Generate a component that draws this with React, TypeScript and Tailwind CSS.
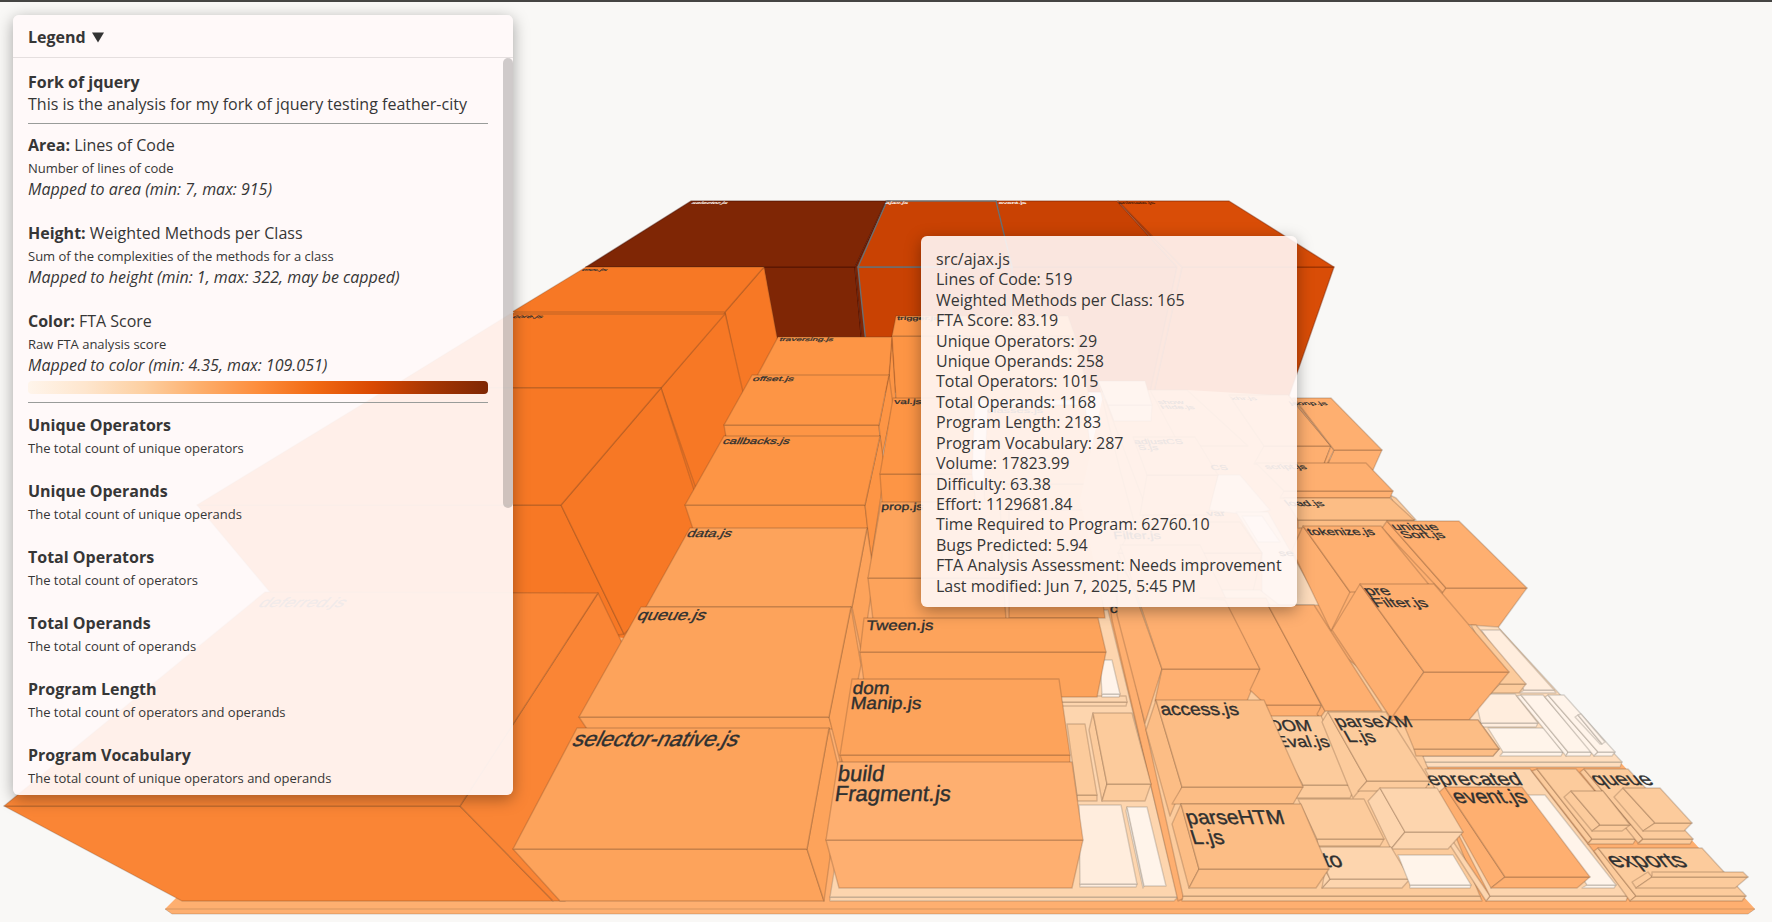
import React from "react";

type Face = { p: string; f: string; s?: string };
type Block = { roof: string; faces?: string[]; fill: string; edge?: string };
type Label = {
  t: string;
  x: number;
  y: number;
  size: number;
  depth: number;
  lean: number;
  fill?: string;
};

const C = {
  umber: "#7f2605",
  rust: "#c94203",
  ember: "#d94d07",
  orange: "#f77825",
  amber: "#fa8535",
  tangerine: "#fd9545",
  apricot: "#fda35b",
  peach: "#feaf70",
  melon: "#fcbd85",
  sand: "#fccb9c",
  wheat: "#fdd5ae",
  cream: "#feddbd",
  shell: "#ffeddd",
  milk: "#fff4ea",
};

const EDGE = "rgba(90,60,40,0.23)";
const PALE_EDGE = "rgba(120,110,100,0.28)";

const ground: Face[] = [
  { p: "177,897 640,480 1300,480 1384,498 1499,628 1622,764 1755,909 165,909", f: C.peach, s: "none" },
  { p: "165,909 1755,909 1748,914 172,914", f: C.peach },
];

const backRow: Block[] = [
  { roof: "691,201 886,201 855,267 586,267", faces: ["586,267 855,267 862,345 586,345", "886,201 890,201 860,267 866,345 862,345 855,267"], fill: C.umber, edge: "rgba(60,10,0,0.4)" },
  { roof: "996,201 1117,201 1177,267 1011,267", faces: ["1011,267 1177,267 1152,392 1009,392"], fill: C.rust, edge: "rgba(110,30,0,0.4)" },
  { roof: "1118,201 1229,201 1334,267 1182,267", faces: ["1182,267 1334,267 1289,396 1154,392", "1118,201 1182,267 1154,392 1150,392 1177,267"], fill: C.ember, edge: "rgba(110,30,0,0.4)" },
  { roof: "887,201 996,201 1012,267 858,267", faces: ["858,267 1012,267 1010,392 871,392"], fill: C.rust, edge: "#6b6f72" },
];

const leftColumn: Block[] = [
  { roof: "586,267 764,267 725,312 512,312", faces: ["725,312 764,267 777,337 790,420 743,400"], fill: C.orange },
  { roof: "510,314 725,314 661,388 390,388", faces: ["725,313 743,392 700,500 661,388"], fill: C.orange },
  { roof: "389,388 661,388 561,505 197,505", faces: ["197,505 561,505 624,634 590,640 310,640", "661,388 694,490 700,560 624,634 561,505"], fill: C.orange },
  { roof: "265,592 598,593 460,806 4,806", faces: ["4,806 460,806 553,901 182,901", "598,593 640,680 586,800 565,901 553,901 460,806"], fill: C.amber },
];

const midColumn: Block[] = [
  { roof: "778,337 892,337 889,376 757,376", faces: ["892,337 896,400 884,410 889,376"], fill: C.tangerine },
  { roof: "752,375 889,375 879,425 724,425", faces: ["724,425 879,425 880,437 726,437", "889,375 893,405 882,457 879,425"], fill: C.tangerine },
  { roof: "724,436 880,436 865,505 685,505", faces: ["685,505 865,505 868,529 693,529", "880,436 885,470 871,560 865,505"], fill: C.tangerine },
  { roof: "690,528 867,528 852,607 646,607", faces: ["867,528 874,575 862,655 852,607"], fill: C.apricot },
  { roof: "641,607 851,607 829,717 579,717", faces: ["579,717 829,717 833,729 587,729", "851,607 861,665 841,765 829,717"], fill: C.apricot },
  { roof: "577,728 829,728 807,849 513,849", faces: ["513,849 807,849 824,901 560,901", "829,728 841,778 824,901 807,849"], fill: C.apricot },
];

const courtyard: Block[] = [
  { roof: "1085,610 1108,610 1178,897 830,897 836,860", faces: ["830,897 1178,897 1174,901 830,901"], fill: C.wheat, edge: PALE_EDGE },
  { roof: "1108,590 1117,600 1187,897 1178,901 1112,620", fill: C.peach },
  { roof: "1040,696 1126,696 1127,702 1040,702", faces: ["1040,702 1127,702 1126,706 1040,706"], fill: C.wheat },
  { roof: "1100,660 1112,660 1120,694 1102,694", faces: ["1102,694 1120,694 1119,697 1102,697"], fill: C.milk, edge: PALE_EDGE },
  { roof: "1067,724 1085,724 1097,795 1077,795", faces: ["1077,795 1097,795 1097,801 1077,801"], fill: C.sand },
  { roof: "1093,713 1132,713 1151,784 1107,784", faces: ["1093,713 1089,730 1102,801 1107,784", "1107,784 1151,784 1145,801 1102,801"], fill: C.sand },
  { roof: "1079,805 1121,805 1137,884 1080,884", faces: ["1080,884 1137,884 1136,887 1080,887"], fill: C.shell, edge: PALE_EDGE },
  { roof: "1127,807 1147,807 1166,886 1144,886", faces: ["1127,807 1144,886 1143,888 1126,811"], fill: C.milk, edge: PALE_EDGE },
];

const innerColumn: Block[] = [
  { roof: "896,316 1068,316 1075,336 892,336", faces: ["892,336 1075,336 1090,400 896,400"], fill: C.tangerine },
  { roof: "893,398 975,398 972,474 880,474", faces: ["880,474 972,474 976,503 882,503"], fill: C.tangerine },
  { roof: "988,405 1085,405 1095,484 984,484", faces: ["984,484 1095,484 1092,540 986,540"], fill: C.apricot },
  { roof: "881,502 1000,502 1003,578 868,578", faces: ["868,578 1003,578 1006,620 873,620"], fill: C.apricot },
  { roof: "1009,510 1090,510 1105,618 1009,618", fill: C.apricot },
  { roof: "864,618 1098,618 1106,652 860,652", faces: ["860,652 1106,652 1097,697 866,697"], fill: C.apricot },
  { roof: "852,679 1059,679 1070,755 840,755", faces: ["840,755 1070,755 1070,763 843,763"], fill: C.apricot },
  { roof: "838,762 1072,762 1083,840 826,840", faces: ["826,840 1083,840 1072,888 839,888"], fill: C.peach },
];

const rightBack: Block[] = [
  { roof: "1102,400 1150,390 1187,390 1290,396 1330,460 1320,540 1322,606 1104,606 1080,500", fill: C.peach, edge: "none" },
  { roof: "1098,381 1145,381 1152,405 1108,405", faces: ["1108,405 1152,405 1151,421 1114,421"], fill: C.wheat },
  { roof: "1150,390 1187,390 1248,446 1180,446", faces: ["1098,381 1145,505 1139,540 1120,470"], fill: C.peach },
  { roof: "1229,395 1288,395 1331,446 1264,446", faces: ["1264,446 1331,446 1324,464 1254,464"], fill: C.peach },
  { roof: "1294,398 1331,398 1382,450 1334,450", faces: ["1334,450 1382,450 1373,470 1328,464", "1294,398 1334,450 1327,464 1324,464 1331,446 1291,398"], fill: C.peach },
  { roof: "1390,495 1396,498 1416,520 1400,520", fill: C.sand },
  { roof: "1256,463 1366,463 1393,491 1284,491", faces: ["1284,491 1393,491 1390,498 1280,498"], fill: C.peach },
  { roof: "1284,498 1390,498 1414,520 1298,520", faces: ["1298,520 1414,520 1414,528 1298,528"], fill: C.melon },
  { roof: "1218,475 1240,475 1270,510 1250,515 1208,510", fill: C.cream, edge: PALE_EDGE },
  { roof: "1133,437 1195,437 1218,475 1147,475", faces: ["1147,475 1218,475 1208,515 1140,515"], fill: C.peach },
  { roof: "1236,512 1268,512 1321,605 1262,605 1262,553", fill: C.cream, edge: PALE_EDGE },
  { roof: "1242,516 1262,516 1280,542 1258,542", fill: C.milk, edge: PALE_EDGE },
  { roof: "1135,522 1240,522 1262,553 1118,553", faces: ["1118,553 1262,553 1250,604 1140,604"], fill: C.peach },
  { roof: "1387,521 1459,521 1527,588 1446,588", faces: ["1387,521 1446,588 1443,593 1382,528", "1446,588 1527,588 1497,629 1470,629 1440,596"], fill: C.peach },
  { roof: "1303,526 1381,526 1435,592 1350,592", faces: ["1303,526 1350,592 1331,631 1292,550"], fill: C.peach },
];

const rightMid: Block[] = [
  { roof: "1115,590 1260,590 1400,700 1480,896 1183,896", faces: ["1183,896 1480,896 1482,901 1182,901"], fill: C.sand },
  { roof: "1120,545 1200,545 1260,669 1162,669", faces: ["1118,560 1117,615 1145,723 1162,669 1130,580", "1162,669 1260,669 1247,701 1155,701"], fill: C.peach },
  { roof: "1200,598 1266,598 1321,705 1266,705 1250,690 1260,669 1225,600", faces: ["1266,705 1321,705 1318,717 1266,717"], fill: C.peach },
  { roof: "1268,605 1314,605 1382,711 1325,711", faces: ["1268,605 1325,711 1320,718 1317,714 1322,705"], fill: C.peach },
];

const parkBase: Block[] = [
  { roof: "1400,620 1498,627 1622,762 1415,762", faces: ["1415,762 1622,762 1620,767 1415,767"], fill: C.cream, edge: PALE_EDGE },
  { roof: "1481,630 1500,630 1554,690 1524,690", faces: ["1524,690 1554,690 1556,693 1520,693"], fill: C.shell, edge: PALE_EDGE },
  { roof: "1471,625 1476,625 1526,684 1500,684", faces: ["1500,684 1526,684 1519,693 1490,693"], fill: C.sand },
  { roof: "1474,694 1515,694 1538,723 1481,723", faces: ["1481,723 1538,723 1536,727 1479,727"], fill: C.shell, edge: PALE_EDGE },
  { roof: "1488,728 1544,728 1563,752 1503,752", faces: ["1503,752 1563,752 1561,756 1500,756"], fill: C.milk, edge: PALE_EDGE },
  { roof: "1521,695 1543,695 1592,752 1568,752", faces: ["1521,695 1517,696 1566,756 1568,752", "1568,752 1592,752 1590,756 1566,756"], fill: C.milk, edge: PALE_EDGE },
  { roof: "1548,695 1564,695 1615,752 1598,752", faces: ["1548,695 1545,697 1594,756 1598,752", "1598,752 1615,752 1612,756 1594,756"], fill: C.milk, edge: PALE_EDGE },
  { roof: "1578,715 1581,714 1605,742 1602,744", faces: ["1578,715 1575,717 1600,744 1602,744"], fill: C.milk, edge: PALE_EDGE },
  { roof: "1402,720 1478,720 1499,749 1414,749", faces: ["1414,749 1499,749 1493,756 1416,756"], fill: C.melon },
];

const preFilter: Block[] = [
  { roof: "1360,584 1434,584 1509,672 1424,672", faces: ["1360,584 1332,630 1392,720 1424,672", "1424,672 1509,672 1469,720 1390,720"], fill: C.peach },
];

const southBlocks: Block[] = [
  { roof: "1425,769 1530,769 1628,896 1490,896", faces: ["1490,896 1628,896 1626,901 1486,901", "1452,840 1490,896 1486,901 1448,842"], fill: C.wheat },
  { roof: "1528,795 1545,795 1616,885 1587,885", faces: ["1587,885 1616,885 1614,888 1582,888"], fill: C.milk, edge: PALE_EDGE },
  { roof: "1537,769 1576,769 1636,839 1592,839", faces: ["1537,769 1532,771 1588,843 1592,839", "1592,839 1636,839 1633,844 1588,844"], fill: C.sand },
  { roof: "1584,769 1628,769 1693,839 1643,839", faces: ["1584,769 1580,772 1638,843 1643,839", "1643,839 1693,839 1690,844 1638,844"], fill: C.sand },
  { roof: "1571,791 1603,791 1630,825 1600,825", faces: ["1571,791 1564,797 1592,831 1600,825", "1600,825 1630,825 1622,831 1592,831"], fill: C.sand },
  { roof: "1598,848 1702,848 1746,896 1636,896", faces: ["1598,848 1594,851 1630,901 1636,896", "1636,896 1746,896 1742,901 1630,901"], fill: C.sand },
  { roof: "1652,872 1743,872 1748,877 1652,877", faces: ["1648,872 1632,882 1636,888 1652,877", "1652,877 1748,877 1735,888 1636,888"], fill: C.sand },
];

const queueBlock: Block[] = [
  { roof: "1623,788 1660,788 1692,823 1655,823", faces: ["1623,788 1614,797 1643,831 1655,823", "1655,823 1692,823 1684,831 1643,831"], fill: C.sand },
];

const eventBlock: Block[] = [
  { roof: "1445,787 1522,787 1590,877 1505,877", faces: ["1445,787 1438,793 1491,888 1505,877", "1505,877 1590,877 1577,888 1491,888"], fill: C.peach },
];

const domBlocks: Block[] = [
  { roof: "1264,716 1321,716 1356,785 1303,785", faces: ["1303,785 1356,785 1350,798 1296,798"], fill: C.sand },
  { roof: "1328,712 1386,712 1430,781 1367,781", faces: ["1328,712 1322,722 1353,798 1367,781", "1367,781 1430,781 1424,791 1358,791"], fill: C.sand },
  { roof: "1298,799 1364,799 1384,839 1317,839", faces: ["1317,839 1384,839 1380,846 1318,846"], fill: C.sand },
  { roof: "1380,788 1437,788 1463,832 1405,832", faces: ["1380,788 1368,801 1391,849 1405,832", "1405,832 1463,832 1448,849 1391,849"], fill: C.wheat },
  { roof: "1316,847 1391,847 1410,879 1330,879", faces: ["1330,879 1410,879 1402,888 1322,888", "1325,870 1330,879 1322,888"], fill: C.wheat },
  { roof: "1398,855 1453,855 1471,885 1410,885", faces: ["1410,885 1471,885 1470,888 1410,888"], fill: C.milk, edge: PALE_EDGE },
];

const accessBlocks: Block[] = [
  { roof: "1156,700 1264,700 1303,787 1182,787", faces: ["1156,700 1146,730 1170,816 1182,787", "1182,787 1303,787 1293,804 1172,804"], fill: C.melon },
  { roof: "1181,804 1301,804 1329,869 1199,869", faces: ["1181,804 1172,824 1189,888 1199,869", "1199,869 1329,869 1316,888 1189,888"], fill: C.melon },
];

const L = (t: string, x: number, y: number, size: number, depth: number, lean: number, fill?: string): Label => ({ t, x, y, size, depth, lean, fill });

const northLabels: Label[] = [
  L("selector.js", 691, 204, 8, 0.4, 1.2, "#f7ece6"),
  L("ajax.js", 885, 204, 8, 0.4, 0.5, "#f7ece6"),
  L("event.js", 999, 204, 8, 0.4, -0.3, "#f7ece6"),
  L("animate.js", 1119, 204, 8, 0.4, -1, "#5c2408"),
];

const leftLabels: Label[] = [
  L("css.js", 581, 271, 10, 0.38, 1.2),
  L("core.js", 512, 318, 10, 0.42, 1.2),
];

const midLabels: Label[] = [
  L("traversing.js", 779, 341, 10, 0.5, 0.5),
  L("offset.js", 752, 381, 12, 0.55, 0.5),
  L("callbacks.js", 722, 444, 13, 0.68, 0.5),
  L("data.js", 686, 537, 15, 0.75, 0.5),
  L("queue.js", 636, 620, 18, 0.83, 0.5),
  L("selector-native.js", 571, 746, 22, 0.96, 0.5),
];

const innerLabels: Label[] = [
  L("trigger.js", 897, 320, 11, 0.5, 0.1),
  L("val.js", 894, 404, 12, 0.6, 0.12),
  L("classes.js", 987, 413, 13, 0.6, 0),
  L("prop.js", 881, 510, 14, 0.72, 0.12),
  L("Tween.js", 866, 630, 17, 0.82, 0.13),
  L("dom", 852, 694, 19, 0.92, 0.14),
  L("Manip.js", 850, 709, 19, 0.92, 0.14),
  L("build", 837, 781, 22, 1, 0.14),
  L("Fragment.js", 834, 801, 22, 1, 0.14),
];

const farLabels: Label[] = [
  L("show", 1159, 404, 11, 0.5, -0.7),
  L("Hide.js", 1162, 409, 11, 0.5, -0.7),
  L("xhr.js", 1232, 400, 11, 0.4, -0.8),
  L("jsonp.js", 1291, 405, 11, 0.42, -0.9),
  L("adjustCS", 1135, 444, 12, 0.6, -0.4),
  L("S.js", 1139, 450, 12, 0.6, -0.4),
  L("CS", 1212, 470, 12, 0.6, -0.5),
  L("script.js", 1267, 469, 12, 0.55, -0.9),
  L("load.js", 1288, 506, 13, 0.6, -0.9),
  L("var", 1208, 516, 13, 0.6, -0.5),
  L("se", 1280, 556, 14, 0.6, -0.5),
  L("Filter.js", 1114, 539, 15, 0.7, -0.2),
  L("init.js", 1133, 575, 17, 0.8, -0.2),
  L("unique", 1395, 530, 15, 0.65, -0.85),
  L("Sort.js", 1404, 538, 15, 0.65, -0.85),
  L("tokenize.js", 1310, 535, 14, 0.7, -0.65),
];

const filterLabels: Label[] = [
  L("pre", 1368, 595, 17, 0.75, -0.75),
  L("Filter.js", 1376, 607, 17, 0.75, -0.75),
];

const southLabels: Label[] = [
  L("deprecated", 1419, 785, 21, 0.85, -0.6),
  L("queue", 1597, 785, 21, 0.85, -0.8),
  L("exports", 1614, 867, 23, 0.9, -0.8),
];

const domLabels: Label[] = [
  L("DOM", 1271, 731, 18, 0.88, -0.4),
  L("Eval.js", 1278, 747, 18, 0.88, -0.4),
  L("parseXM", 1338, 727, 19, 0.85, -0.55),
  L("L.js", 1348, 742, 19, 0.85, -0.55),
  L("to", 1326, 867, 22, 0.95, -0.4),
];

const accessLabels: Label[] = [
  L("access.js", 1162, 715, 19, 0.9, -0.3),
  L("parseHTM", 1188, 824, 21, 0.95, -0.32),
  L("L.js", 1193, 844, 21, 0.95, -0.32),
];

function Blocks({ items }: { items: Block[] }) {
  return (
    <>
      {items.map((b) => (
        <g key={b.roof} fill={b.fill} stroke={b.edge ?? EDGE} strokeWidth="1.4" strokeLinejoin="round">
          {(b.faces ?? []).map((p) => (
            <polygon key={p} points={p} />
          ))}
          <polygon points={b.roof} />
        </g>
      ))}
    </>
  );
}

/* Names lie flat on the roofs, so each one follows the plane of its roof. */
function Labels({ items }: { items: Label[] }) {
  return (
    <>
      {items.map((l) => (
        <text
          key={`${l.t}${l.x}`}
          fontSize={l.size}
          fill={l.fill ?? "#2f3030"}
          stroke={l.fill ?? "#2f3030"}
          strokeWidth="0.4"
          transform={`matrix(1 0 ${-l.lean * l.depth} ${l.depth} ${l.x} ${l.y})`}
        >
          {l.t}
        </text>
      ))}
    </>
  );
}

function City() {
  return (
    <svg
      viewBox="0 0 1772 922"
      preserveAspectRatio="xMidYMin slice"
      className="absolute inset-0 h-full w-full font-['Liberation_Sans',Arial,sans-serif]"
      role="img"
      aria-label="Code city"
    >
      {ground.map((g) => (
        <polygon key={g.p} points={g.p} fill={g.f} stroke={g.s ?? EDGE} />
      ))}
      <Blocks items={backRow} />
      <Labels items={northLabels} />
      <polygon points="586,268 764,268 790,420 640,640 320,600 200,505" fill={C.orange} />
      <Blocks items={leftColumn.slice(0, 3)} />
      <Labels items={leftLabels} />
      <Blocks items={leftColumn.slice(3)} />
      <Labels items={[L("deferred.js", 257, 607, 18, 0.75, 0.9)]} />
      <Blocks items={courtyard} />
      <Blocks items={midColumn} />
      <Blocks items={innerColumn} />
      <Labels items={midLabels} />
      <Labels items={innerLabels} />
      <Blocks items={rightBack} />
      <Labels items={farLabels} />
      <Blocks items={parkBase} />
      <Blocks items={rightMid} />
      <Labels items={[L("c", 1110, 613, 15, 0.8, 0)]} />
      <Blocks items={preFilter} />
      <Blocks items={parkBase.slice(8)} />
      <Labels items={filterLabels} />
      <Blocks items={southBlocks} />
      <Labels items={southLabels} />
      <Blocks items={queueBlock} />
      <Blocks items={eventBlock} />
      <Labels items={[L("event.js", 1457, 803, 21, 0.92, -0.6)]} />
      <Blocks items={domBlocks} />
      <Labels items={domLabels} />
      <Blocks items={accessBlocks} />
      <Labels items={accessLabels} />
    </svg>
  );
}

const mappings = [
  { axis: "Area:", metric: "Lines of Code", text: "Number of lines of code", range: "Mapped to area (min: 7, max: 915)" },
  { axis: "Height:", metric: "Weighted Methods per Class", text: "Sum of the complexities of the methods for a class", range: "Mapped to height (min: 1, max: 322, may be capped)" },
  { axis: "Color:", metric: "FTA Score", text: "Raw FTA analysis score", range: "Mapped to color (min: 4.35, max: 109.051)" },
];

const metrics = [
  ["Unique Operators", "The total count of unique operators"],
  ["Unique Operands", "The total count of unique operands"],
  ["Total Operators", "The total count of operators"],
  ["Total Operands", "The total count of operands"],
  ["Program Length", "The total count of operators and operands"],
  ["Program Vocabulary", "The total count of unique operators and operands"],
];

function Legend() {
  return (
    <aside className="absolute left-[13px] top-[15px] flex h-[780px] max-h-[calc(100vh-30px)] w-[500px] flex-col overflow-hidden rounded-md bg-[#fff9f9]/93 shadow-[0_4px_16px_rgba(0,0,0,0.35)]">
      <button type="button" className="flex h-[43px] shrink-0 items-center gap-1.5 border-b border-black/10 px-[15px] pt-0.5 text-left font-bold">
        Legend
        <svg width="12" height="11" viewBox="0 0 12 11" aria-hidden="true">
          <path d="M0 0.5H12L6 10.5Z" fill="#333" />
        </svg>
      </button>
      <div className="relative min-h-0 flex-1">
        <div className="h-full overflow-y-auto pb-1 pl-[15px] pr-[25px] pt-[13px] [scrollbar-width:none]">
          <h1 className="font-bold">Fork of jquery</h1>
          <p>This is the analysis for my fork of jquery testing feather-city</p>
          <hr className="mb-2.5 mt-2 border-[#999c9a]" />
          <div className="flex flex-col gap-[22px]">
            {mappings.map((m) => (
              <section key={m.axis}>
                <h2>
                  <b>{m.axis}</b> {m.metric}
                </h2>
                <p className="pt-0.5 text-[13px] leading-5">{m.text}</p>
                <p className="italic">{m.range}</p>
              </section>
            ))}
          </div>
          <div className="mt-[5px] h-[13px] rounded-sm bg-[linear-gradient(to_right,#fff5eb,#fee6ce,#fdd0a2,#fdae6b,#fd8d3c,#f16913,#d94801,#a63603,#7f2704)]" />
          <hr className="mb-[11px] mt-2 border-[#999c9a]" />
          <div className="flex flex-col gap-[22px]">
            {metrics.map(([name, text]) => (
              <section key={name}>
                <h2 className="font-bold">{name}</h2>
                <p className="pt-0.5 text-[13px] leading-5">{text}</p>
              </section>
            ))}
          </div>
        </div>
        <div className="absolute right-0 top-0 h-[450px] w-2.5 rounded-full bg-black/19" />
      </div>
    </aside>
  );
}

const details = [
  "src/ajax.js",
  "Lines of Code: 519",
  "Weighted Methods per Class: 165",
  "FTA Score: 83.19",
  "Unique Operators: 29",
  "Unique Operands: 258",
  "Total Operators: 1015",
  "Total Operands: 1168",
  "Program Length: 2183",
  "Program Vocabulary: 287",
  "Volume: 17823.99",
  "Difficulty: 63.38",
  "Effort: 1129681.84",
  "Time Required to Program: 62760.10",
  "Bugs Predicted: 5.94",
  "FTA Analysis Assessment: Needs improvement",
  "Last modified: Jun 7, 2025, 5:45 PM",
];

function Tooltip() {
  return (
    <div
      role="tooltip"
      className="absolute left-[921px] top-[236px] grid min-h-[371px] w-[376px] auto-rows-fr whitespace-nowrap rounded-md bg-[#fff8f7]/90 px-[15px] pb-[11px] pt-[13px] leading-5 shadow-[0_4px_16px_rgba(0,0,0,0.35)]"
    >
      {details.map((d) => (
        <p key={d}>{d}</p>
      ))}
    </div>
  );
}

export default function App() {
  return (
    <main className="relative h-screen overflow-hidden bg-[#f9f8f6] font-['Open_Sans','Noto_Sans',sans-serif] text-[16px] leading-[22px] text-[#363636]">
      <City />
      <div className="absolute inset-x-0 top-0 h-0.5 bg-[#454543]" />
      <Legend />
      <Tooltip />
    </main>
  );
}
